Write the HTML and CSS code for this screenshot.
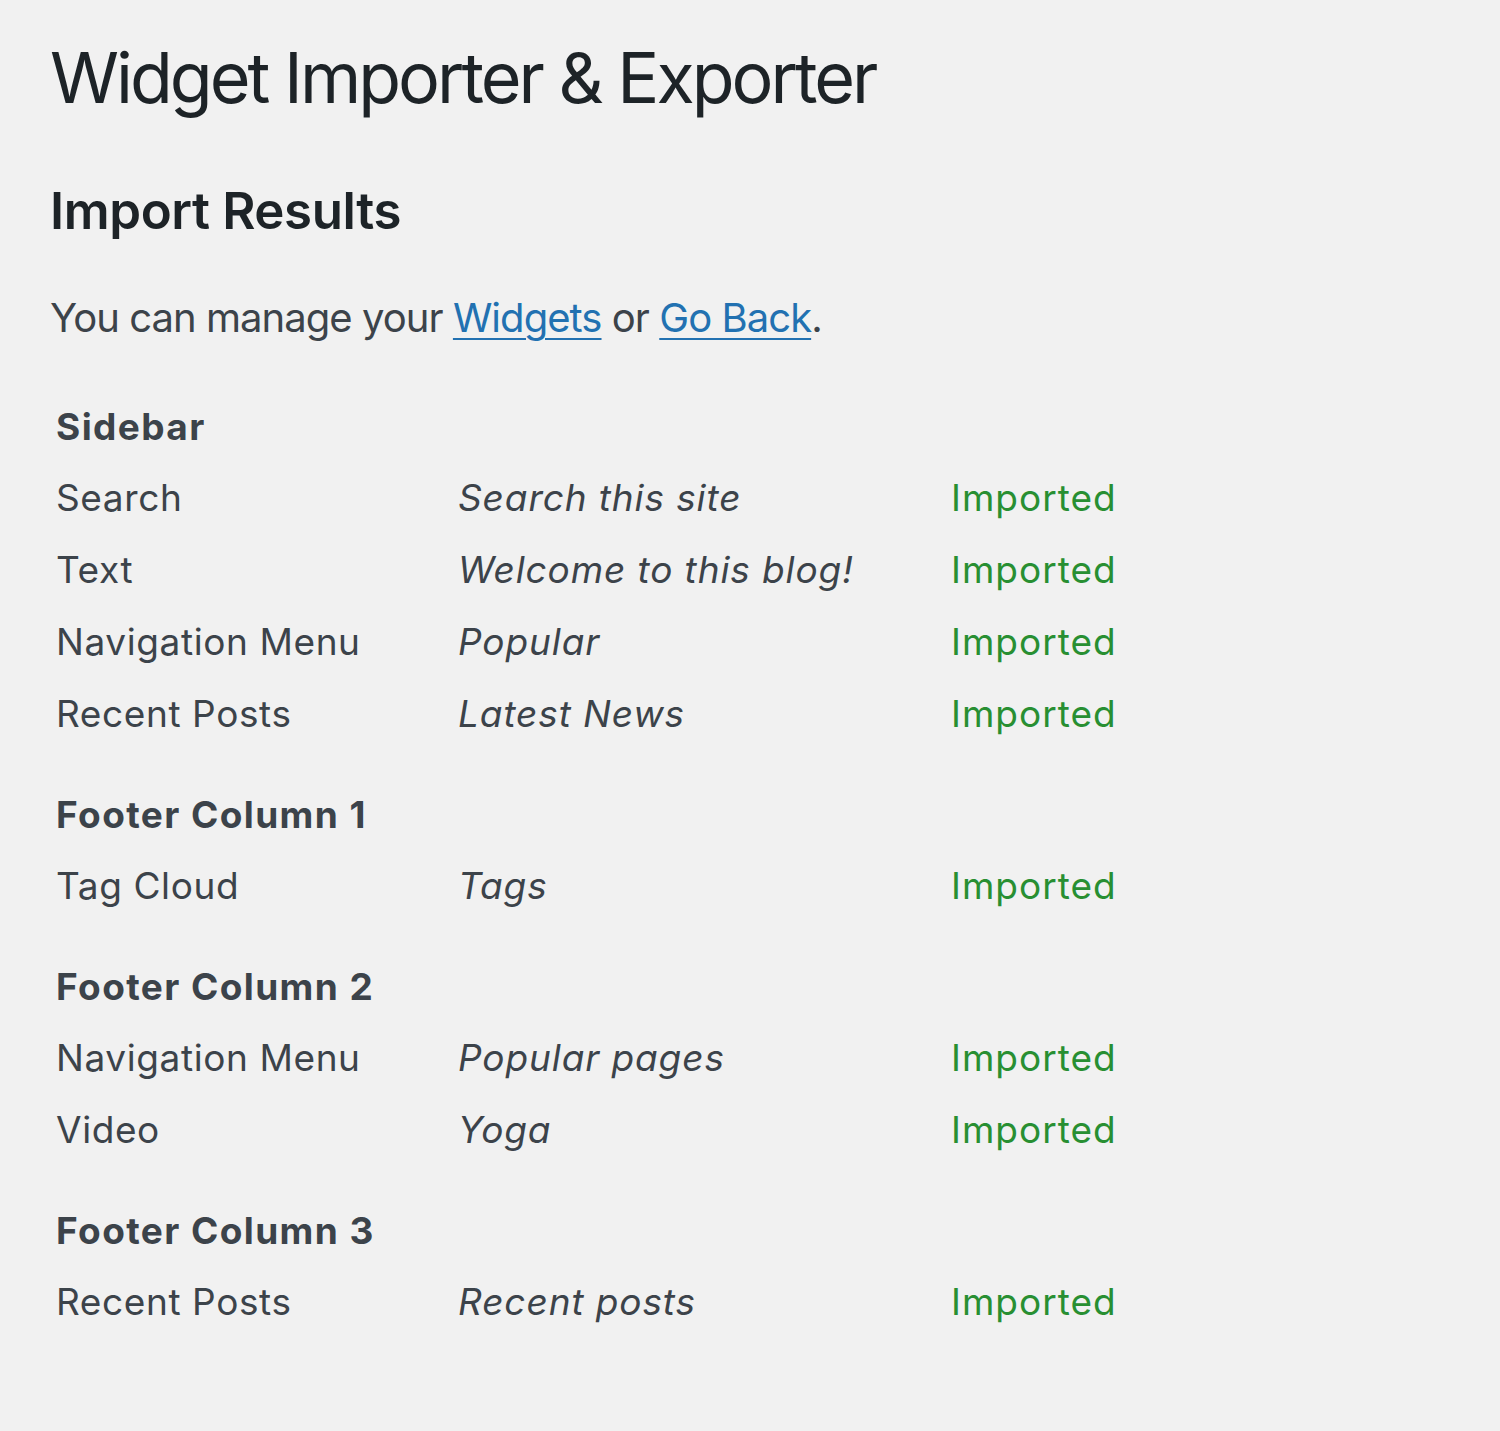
FILE: index.html
```html
<!DOCTYPE html>
<html lang="en">
<head>
<meta charset="utf-8">
<title>Widget Importer &amp; Exporter</title>
<link rel="stylesheet" href="styles.css">
</head>
<body>
<div class="wrap">
  <h1 class="page-title">Widget Importer &amp; Exporter</h1>
  <h2 class="section-title">Import Results</h2>
  <p class="intro">You can manage your <a href="#">Widgets</a> or <a href="#">Go Back</a>.</p>

  <div class="results">
    <div class="group first">Sidebar</div>
    <div class="cell">Search</div><div class="cell title">Search this site</div><div class="cell ok">Imported</div>
    <div class="cell">Text</div><div class="cell title">Welcome to this blog!</div><div class="cell ok">Imported</div>
    <div class="cell">Navigation Menu</div><div class="cell title">Popular</div><div class="cell ok">Imported</div>
    <div class="cell">Recent Posts</div><div class="cell title">Latest News</div><div class="cell ok">Imported</div>

    <div class="group">Footer Column 1</div>
    <div class="cell">Tag Cloud</div><div class="cell title">Tags</div><div class="cell ok">Imported</div>

    <div class="group">Footer Column 2</div>
    <div class="cell">Navigation Menu</div><div class="cell title">Popular pages</div><div class="cell ok">Imported</div>
    <div class="cell">Video</div><div class="cell title">Yoga</div><div class="cell ok">Imported</div>

    <div class="group">Footer Column 3</div>
    <div class="cell">Recent Posts</div><div class="cell title">Recent posts</div><div class="cell ok">Imported</div>
  </div>
</div>
</body>
</html>
```

FILE: styles.css
```css
html, body {
  margin: 0;
  padding: 0;
  background: #f1f1f1;
}

body {
  font-family: Inter, "Noto Sans", sans-serif;
  color: #3c434a;
}

.wrap {
  padding: 0 0 80px 50px;
}

.page-title {
  margin: 28px 0 0;
  font-size: 70px;
  line-height: 100px;
  font-weight: 400;
  letter-spacing: -3px;
  color: #1d2327;
}

.section-title {
  margin: 53px 0 0;
  font-size: 51px;
  line-height: 60px;
  font-weight: 600;
  letter-spacing: -0.4px;
  color: #1d2327;
}

.intro {
  margin: 52px 0 0;
  font-size: 40px;
  line-height: 50px;
  letter-spacing: -0.95px;
  color: #3c434a;
}

.intro a {
  color: #2271b1;
  text-decoration: underline;
  text-underline-offset: 6px;
  text-decoration-thickness: 2px;
}

.results {
  margin: 49px 0 0 6px;
  display: grid;
  grid-template-columns: 402px 493px auto;
  font-size: 37px;
}

.group {
  grid-column: 1 / -1;
  font-weight: 700;
  line-height: 70px;
  padding-top: 30px;
  letter-spacing: 1.4px;
  color: #3c434a;
}

.group.first {
  padding-top: 0;
}

.cell {
  line-height: 72px;
  white-space: nowrap;
  letter-spacing: 0.6px;
}

.title {
  font-style: italic;
  letter-spacing: 0.9px;
}

.ok {
  color: #288f32;
  letter-spacing: 1px;
}
```
